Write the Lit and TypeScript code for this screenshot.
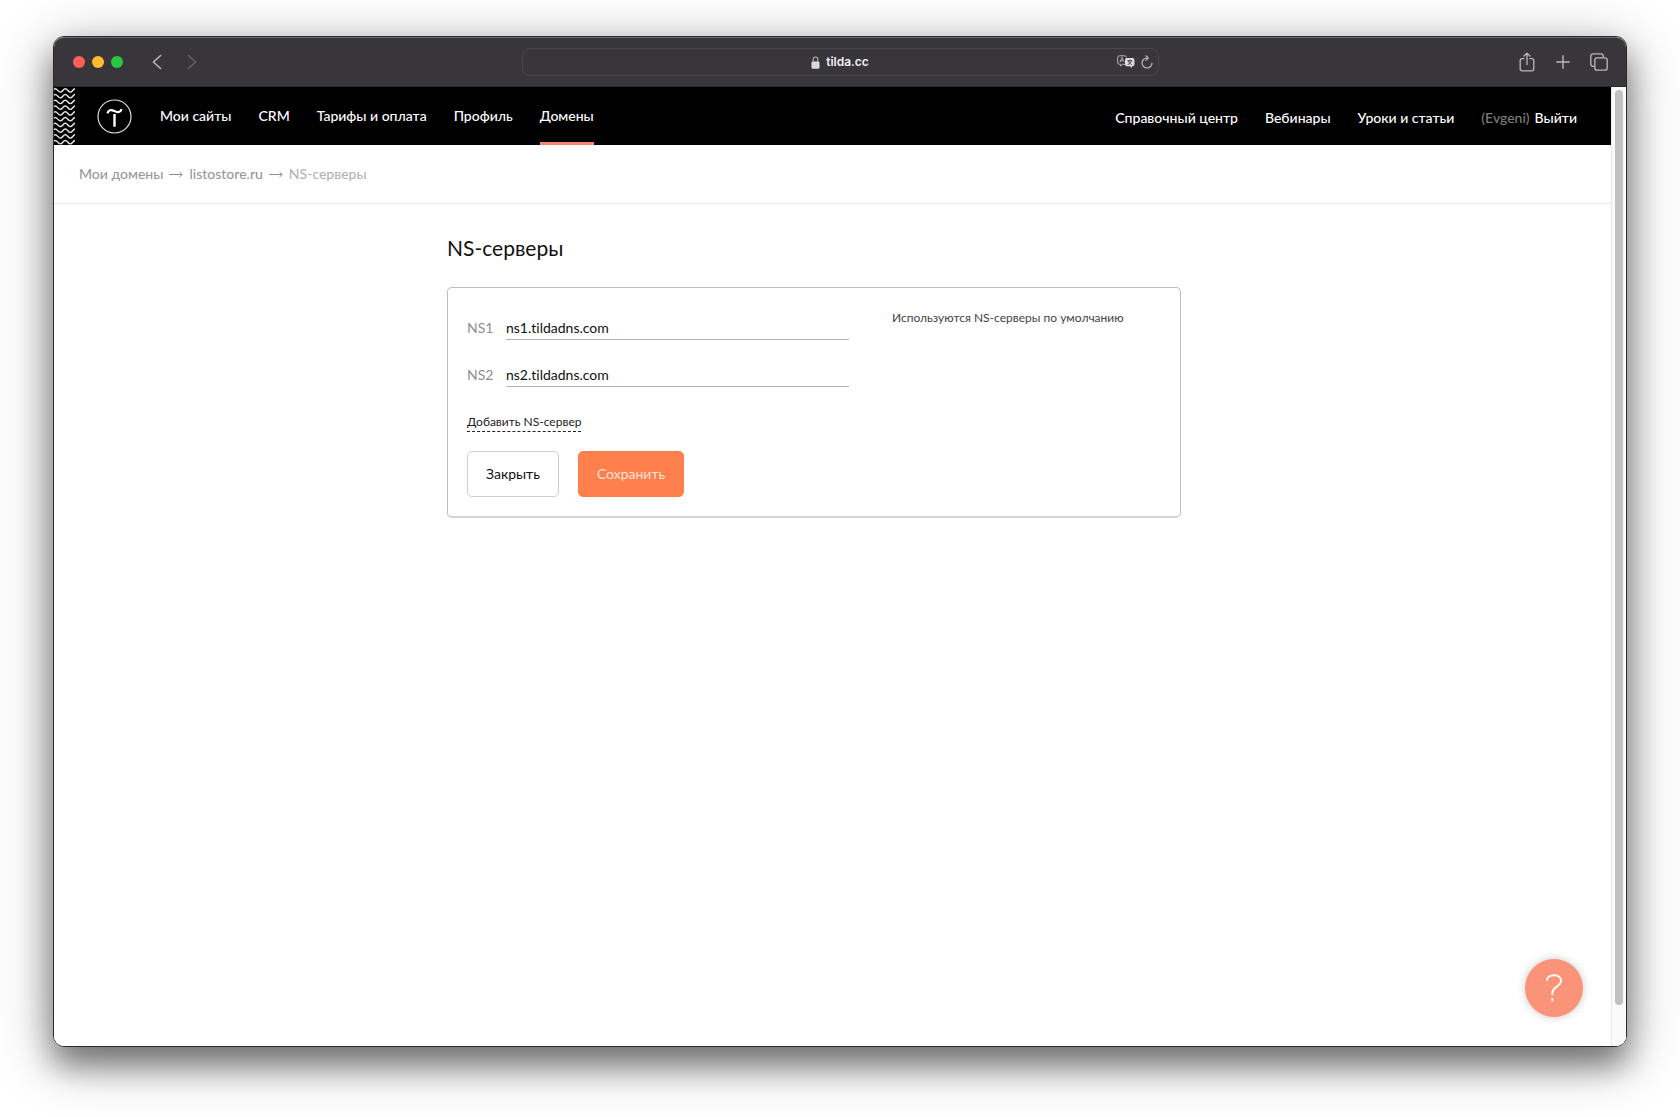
import { LitElement, html, svg, css } from "lit";
import { customElement, property } from "lit/decorators.js";
import { classMap } from "lit/directives/class-map.js";

@customElement("browser-toolbar")
class BrowserToolbar extends LitElement {
  @property() host = "";

  static styles = css`
    :host {
      display: grid;
      grid-template-columns: 1fr minmax(0, 637px) 1fr;
      align-items: center;
      height: 50px;
      box-sizing: border-box;
      background: #39363b;
      border-top: 1px solid #6d6b6f;
      border-bottom: 1px solid #2a282c;
      color: #b9b8ba;
      font-family: Inter, "Liberation Sans", sans-serif;
    }
    .left,
    .right {
      display: flex;
      align-items: center;
    }
    .left {
      padding-left: 19px;
    }
    .right {
      justify-content: flex-end;
      gap: 16px;
      padding-right: 17px;
    }
    .lights {
      display: flex;
      gap: 7px;
      margin-right: 26px;
    }
    .light {
      width: 12px;
      height: 12px;
      border-radius: 50%;
    }
    .red { background: #ff5f57; }
    .yellow { background: #febc2e; }
    .green { background: #28c840; }
    button {
      display: flex;
      align-items: center;
      justify-content: center;
      padding: 0;
      border: 0;
      background: none;
      color: inherit;
    }
    button:disabled { color: #626065; }
    .back { margin-right: 20px; }
    .nav { width: 15px; }
    .tool { width: 20px; }
    .address {
      display: grid;
      grid-template-columns: 1fr auto 1fr;
      align-items: center;
      box-sizing: border-box;
      height: 28px;
      padding: 0 5px;
      border: 1px solid #4a474d;
      border-radius: 8px;
    }
    .site {
      grid-column: 2;
      display: flex;
      align-items: center;
      gap: 6px;
      color: #f0f0f0;
      font-size: 12px;
      font-weight: 600;
      line-height: 16px;
    }
    .actions {
      display: flex;
      justify-content: flex-end;
      gap: 6px;
    }
    svg { display: block; }
  `;

  render() {
    return html`
      <div class="left">
        <div class="lights">
          <span class="light red"></span><span class="light yellow"></span><span class="light green"></span>
        </div>
        <button class="nav back" aria-label="Назад">
          <svg width="10" height="16" viewBox="0 0 10 16" fill="none" stroke="currentColor" stroke-width="1.6" stroke-linecap="round" stroke-linejoin="round"><path d="M8.6 1.5 1.4 8l7.2 6.5" /></svg>
        </button>
        <button class="nav" aria-label="Вперёд" disabled>
          <svg width="10" height="16" viewBox="0 0 10 16" fill="none" stroke="currentColor" stroke-width="1.6" stroke-linecap="round" stroke-linejoin="round"><path d="M1.4 1.5 8.6 8l-7.2 6.5" /></svg>
        </button>
      </div>
      <div class="address">
        <div class="site">
          <svg width="9" height="13" viewBox="0 0 9 13"><rect x="0.5" y="5.5" width="8" height="7.2" rx="1.2" fill="#d9d9da" /><path d="M2.2 6V3.6a2.3 2.6 0 0 1 4.6 0V6" fill="none" stroke="#b5b4b6" stroke-width="1.1" /></svg>
          <span>${this.host}</span>
        </div>
        <div class="actions">
          <button aria-label="Перевести">
            <svg width="18" height="14" viewBox="0 0 18 14" fill="none">
              <path d="M8.2 9.3H5.5L3.6 11V9.3H2.6A1.9 1.9 0 0 1 .7 7.4V2.7A1.9 1.9 0 0 1 2.6.8h4.9a1.9 1.9 0 0 1 1.9 1.7" stroke="#b9b8ba" />
              <path d="m3 7.4 2-5 1.7 4.3M3.6 5.8h2.8" stroke="#b9b8ba" stroke-width=".9" />
              <path d="M9.9 3.1h5.6a1.9 1.9 0 0 1 1.9 1.9v4.3a1.9 1.9 0 0 1-1.9 1.9h-.6v1.9l-2-1.9h-3A1.9 1.9 0 0 1 8 9.3V5a1.9 1.9 0 0 1 1.9-1.9Z" fill="#dededf" />
              <path d="M10.3 5.7h5M12.8 4.5v1.2M14.3 5.9c-.4 1.7-1.6 2.9-3.6 3.7M11.3 5.9c.5 1.7 1.7 2.9 3.5 3.7" stroke="#39363b" stroke-width=".9" />
            </svg>
          </button>
          <button aria-label="Обновить">
            <svg width="12" height="14" viewBox="0 0 12 14" fill="none" stroke="#b9b8ba" stroke-width="1.2" stroke-linecap="round" stroke-linejoin="round"><path d="M6.8 3H6a5 5 0 1 0 5 5M4.9.8 7.2 3 4.9 5.3" /></svg>
          </button>
        </div>
      </div>
      <div class="right">
        <button class="tool" aria-label="Поделиться">
          <svg width="16" height="20" viewBox="0 0 16 20" fill="none" stroke="currentColor" stroke-width="1.3" stroke-linecap="round" stroke-linejoin="round"><path d="M5 6.600H3.200A2 2 0 0 0 1.200 8.600v8.200a2 2 0 0 0 2 2h9.600a2 2 0 0 0 2-2V8.600a2 2 0 0 0-2-2H11M8 12.500V1.200M5 4l3-2.900L11 4" /></svg>
        </button>
        <button class="tool" aria-label="Новая вкладка">
          <svg width="14" height="14" viewBox="0 0 14 14" fill="none" stroke="currentColor" stroke-width="1.4" stroke-linecap="round"><path d="M7 .8v12.400M.8 7h12.400" /></svg>
        </button>
        <button class="tool" aria-label="Обзор вкладок">
          <svg width="18" height="18" viewBox="0 0 18 18" fill="none" stroke="currentColor" stroke-width="1.3"><rect x="4.8" y="4.8" width="12.4" height="12.4" rx="2.3" /><path d="M4.800 13.300H3.100A2.300 2.300 0 0 1 .8 11V3.100A2.300 2.300 0 0 1 3.100.8H11a2.300 2.300 0 0 1 2.300 2.300v1.700" /></svg>
        </button>
      </div>
    `;
  }
}

interface NavItem {
  label: string;
  active?: boolean;
}

@customElement("site-header")
class SiteHeader extends LitElement {
  private items: NavItem[] = [
    { label: "Мои сайты" },
    { label: "CRM" },
    { label: "Тарифы и оплата" },
    { label: "Профиль" },
    { label: "Домены", active: true },
  ];
  private help = ["Справочный центр", "Вебинары", "Уроки и статьи"];

  static styles = css`
    :host {
      display: flex;
      align-items: stretch;
      height: 58px;
      background: #000;
      color: #fff;
      font-size: 14px;
      font-weight: 500;
      line-height: 20px;
    }
    svg { display: block; }
    a {
      color: inherit;
      text-decoration: none;
      white-space: nowrap;
    }
    .logo {
      display: flex;
      align-items: center;
      margin: 0 28px 0 22px;
    }
    nav {
      display: flex;
      gap: 27px;
    }
    .item {
      display: flex;
      align-items: center;
      box-sizing: border-box;
      border-top: 3px solid transparent;
      border-bottom: 3px solid transparent;
    }
    .active { border-bottom-color: #fa876b; }
    .service {
      margin-left: auto;
      padding: 4px 34px 0 0;
      align-items: center;
    }
    .account {
      display: flex;
      gap: 5px;
    }
    .user { color: #7d7d7d; }
  `;

  render() {
    const rows = Array.from({ length: 12 }, (_, i) => i * 5.75 - 4);
    return html`
      <svg width="21" height="58" viewBox="0 0 21 58" fill="none" stroke="#e6e6e6" stroke-width="1.4" aria-hidden="true">
        ${rows.map((y) => svg`<path transform="translate(0 ${y})" d="M-3.900 3.400C-1.500 3.400-1 0 1.200 0S4 3.400 6.300 3.400 9 0 11.300 0s2.800 3.400 5 3.400S19 0 21.300 0" />`)}
      </svg>
      <a class="logo" href="#" aria-label="Tilda">
        <svg width="35" height="35" viewBox="0 0 35 35" fill="none" stroke="#fff"><circle cx="17.5" cy="17.5" r="16.5" stroke-width="1.2" stroke="#dedede" /><path d="M10.400 14.400c1-3.700 3.600-4 6.900-2.300 3.500 1.800 6.300 1.200 7.300-2" stroke-width="2.200" /><path d="M17.500 15v12.800" stroke-width="2.400" /></svg>
      </a>
      <nav>
        ${this.items.map(
          (item) => html`<a href="#" class=${classMap({ item: true, active: !!item.active })}>${item.label}</a>`
        )}
      </nav>
      <nav class="service">
        ${this.help.map((label) => html`<a href="#">${label}</a>`)}
        <span class="account"><span class="user">(Evgeni)</span><a href="#">Выйти</a></span>
      </nav>
    `;
  }
}

@customElement("bread-crumbs")
class BreadCrumbs extends LitElement {
  static styles = css`
    :host {
      display: flex;
      align-items: center;
      gap: 6px;
      box-sizing: border-box;
      height: 59px;
      padding: 0 25px;
      border-bottom: 1px solid #e9e9e9;
      font-size: 14px;
      font-weight: 500;
      line-height: 20px;
      color: #999;
    }
    a {
      color: inherit;
      text-decoration: none;
    }
    .current { color: #b4b4b4; }
  `;

  render() {
    const arrow = html`<svg width="14" height="8" viewBox="0 0 14 8" fill="none" stroke="#8c8c8c" aria-hidden="true"><path d="M0 4.500h13M10.500 2l2.700 2.500L10.500 7" /></svg>`;
    return html`
      <a href="#">Мои домены</a>${arrow}<a href="#">listostore.ru</a>${arrow}<span class="current">NS-серверы</span>
    `;
  }
}

@customElement("ns-form")
class NsForm extends LitElement {
  private servers = ["ns1.tildadns.com", "ns2.tildadns.com"];

  static styles = css`
    :host {
      display: block;
      color: #111;
    }
    h1 {
      margin: 0 0 24px;
      font-size: 21px;
      font-weight: 400;
      line-height: 30px;
    }
    .card {
      display: grid;
      grid-template-columns: minmax(0, 382px) minmax(0, 1fr);
      column-gap: 43px;
      box-sizing: border-box;
      padding: 19px;
      border: 1px solid #bdbdbd;
      border-bottom: 2px solid #d2d2d2;
      border-radius: 5px;
    }
    .row {
      display: grid;
      grid-template-columns: 27px minmax(0, 1fr);
      column-gap: 12px;
      align-items: center;
      margin-bottom: 19px;
    }
    .first { margin-top: 5px; }
    label {
      padding-top: 4px;
      color: #8e8e8e;
      font-size: 14px;
      line-height: 20px;
      white-space: nowrap;
    }
    input {
      box-sizing: border-box;
      width: 100%;
      height: 28px;
      padding: 5px 0 2px;
      border: 0;
      border-bottom: 1px solid #b3b3b3;
      border-radius: 0;
      outline: 0;
      background: none;
      color: #111;
      font: inherit;
      font-size: 14px;
      line-height: 20px;
      font-variant-ligatures: none;
    }
    .add {
      display: inline-block;
      margin-top: 7px;
      color: #222;
      border-bottom: 1px dashed #222;
      font-size: 12px;
      line-height: 18px;
      text-decoration: none;
    }
    .buttons {
      display: flex;
      gap: 19px;
      margin-top: 19px;
    }
    button {
      height: 46px;
      padding: 0 18px;
      border: 1px solid #cfcfcf;
      border-radius: 5px;
      background: #fff;
      color: #111;
      font: inherit;
      font-size: 14px;
      line-height: 20px;
    }
    .save {
      border-color: #ff7f4d;
      background: #ff7f4d;
      color: #ffe3d8;
    }
    .note {
      margin: 1px 0 0;
      color: #444;
      font-size: 12px;
      line-height: 20px;
    }
  `;

  render() {
    return html`
      <h1>NS-серверы</h1>
      <section class="card">
        <form>
          ${this.servers.map(
            (value, i) => html`<div class=${classMap({ row: true, first: i === 0 })}>
              <label for="ns${i + 1}">NS${i + 1}</label>
              <input id="ns${i + 1}" type="text" .value=${value} />
            </div>`
          )}
          <a class="add" href="#">Добавить NS-сервер</a>
          <div class="buttons">
            <button type="button">Закрыть</button>
            <button type="button" class="save">Сохранить</button>
          </div>
        </form>
        <p class="note">Используются NS-серверы по умолчанию</p>
      </section>
    `;
  }
}

@customElement("app-root")
class AppRoot extends LitElement {
  static styles = css`
    :host {
      display: flex;
      box-sizing: border-box;
      min-height: 100vh;
      padding: 36px 53px 70px;
      overflow: hidden;
      background: #fff;
      font-family: Lato, "Open Sans", sans-serif;
    }
    .window {
      flex: 1;
      display: flex;
      flex-direction: column;
      min-width: 0;
      border: 1px solid #2b2b2c;
      border-radius: 11px;
      box-shadow: 0 18px 30px rgba(0, 0, 0, 0.4), 0 12px 56px rgba(0, 0, 0, 0.36);
    }
    browser-toolbar { border-radius: 10px 10px 0 0; }
    .view {
      flex: 1;
      display: flex;
      min-height: 0;
      border-radius: 0 0 10px 10px;
      overflow: hidden;
      background: #fff;
    }
    .page {
      position: relative;
      flex: 1;
      min-width: 0;
    }
    main {
      box-sizing: border-box;
      max-width: 771px;
      margin: 0 auto;
      padding: 29px 37px 40px 0;
    }
    .scrollbar {
      display: flex;
      box-sizing: border-box;
      width: 15px;
      padding: 3px 3px 41px;
      border-left: 1px solid #e8e8e8;
      background: #fafafa;
    }
    .thumb {
      width: 8px;
      border-radius: 4px;
      background: #c1c1c1;
    }
    .help {
      position: absolute;
      right: 28px;
      bottom: 29px;
      display: flex;
      align-items: center;
      justify-content: center;
      width: 58px;
      height: 58px;
      padding: 0;
      border: 0;
      border-radius: 50%;
      background: #fa9378;
      box-shadow: 0 0 8px rgba(0, 0, 0, 0.22);
    }
  `;

  render() {
    return html`
      <div class="window">
        <browser-toolbar host="tilda.cc"></browser-toolbar>
        <div class="view">
          <div class="page">
            <site-header></site-header>
            <bread-crumbs></bread-crumbs>
            <main><ns-form></ns-form></main>
            <button class="help" aria-label="Помощь">
              <svg width="18" height="28" viewBox="0 0 18 28" fill="none" stroke="#fff" stroke-width="1.9"><path d="M2 6.500C2 3 5.200 1.200 9 1.200c4.100 0 7 2.300 7 5.500 0 6-8.700 5.900-8.700 12.300v2.200M7.300 24v3.500" /></svg>
            </button>
          </div>
          <div class="scrollbar" aria-hidden="true"><div class="thumb"></div></div>
        </div>
      </div>
    `;
  }
}
